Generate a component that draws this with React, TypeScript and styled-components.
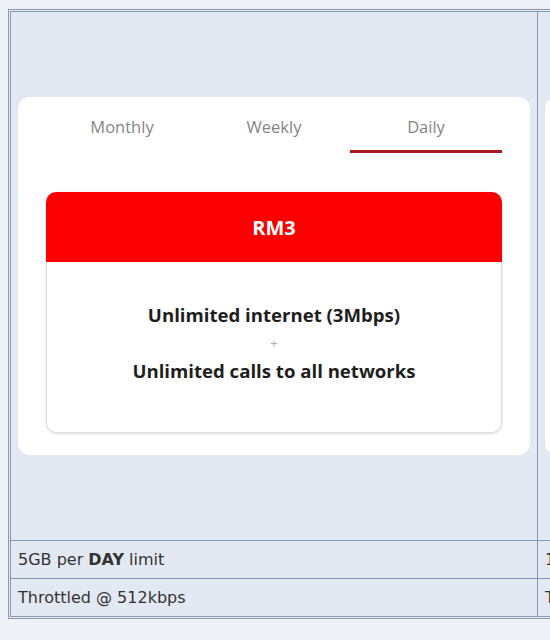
import { Fragment } from 'react';
import styled, { createGlobalStyle } from 'styled-components';

const GlobalStyle = createGlobalStyle`
  html, body {
    margin: 0;
    padding: 0;
    background: #eef1f6;
    overflow: hidden;
  }
  body {
    font-family: "DejaVu Sans", Verdana, sans-serif;
  }
`;

const Page = styled.div`
  padding: 9px 0 0 8px;
  width: 1200px;
`;

const Frame = styled.div`
  display: inline-block;
  border: 1px solid #8796ae;
  padding: 1px;
  background: #e9eef5;
`;

// tracks include each cell's right/bottom border
const Grid = styled.div`
  display: grid;
  grid-template-columns: 527px 527px;
  grid-template-rows: 529px 38px 38px;
  border-top: 1px solid #8796ae;
  border-left: 1px solid #8796ae;
`;

const Cell = styled.div<{ $media?: boolean }>`
  background: #e3e9f2;
  border-right: 1px solid #8796ae;
  border-bottom: 1px solid #8796ae;
  display: flex;
  align-items: center;
  justify-content: ${(p) => (p.$media ? 'center' : 'flex-start')};
  padding: ${(p) => (p.$media ? '0' : '0 7px')};
  font-size: 16px;
  color: #333;
  white-space: pre;
  overflow: hidden;
`;

const Card = styled.div`
  width: 512px;
  height: 358px;
  box-sizing: border-box;
  background: #fff;
  border-radius: 12px;
  padding: 0 28px;
  display: flex;
  flex-direction: column;
  font-family: "Open Sans", "Liberation Sans", sans-serif;
`;

const Tabs = styled.div`
  display: grid;
  grid-template-columns: repeat(3, 1fr);
  margin-top: 10px;
`;

const Tab = styled.div<{ $active?: boolean }>`
  text-align: center;
  font-size: 16.5px;
  line-height: 20px;
  color: #858585;
  padding: 10px 0 13px;
  border-bottom: 3px solid ${(p) => (p.$active ? '#ad1620' : 'transparent')};
`;

const Plan = styled.div`
  margin-top: 39px;
  border-radius: 10px;
  box-shadow: 0 1px 3px rgba(0, 0, 0, 0.12);
`;

const Price = styled.div`
  height: 70px;
  background: #fb0000;
  border-radius: 10px 10px 0 0;
  color: #fff;
  font-weight: 700;
  font-size: 20px;
  display: flex;
  align-items: center;
  justify-content: center;
`;

const Details = styled.div`
  height: 171px;
  box-sizing: border-box;
  padding-bottom: 9px;
  border: 1px solid #dcdcdc;
  border-top: none;
  border-radius: 0 0 10px 10px;
  display: flex;
  flex-direction: column;
  align-items: center;
  justify-content: center;
  gap: 8px;
`;

const Feature = styled.div`
  font-weight: 700;
  font-size: 18.6px;
  line-height: 24px;
  color: #1e1e1e;
`;

const Plus = styled.div`
  font-size: 13px;
  line-height: 16px;
  color: #b0b0b0;
`;

type PlanData = {
  price: string;
  features: string[];
};

function PlanCard({ active, plan }: { active: number; plan: PlanData }) {
  const tabs = ['Monthly', 'Weekly', 'Daily'];
  return (
    <Card>
      <Tabs>
        {tabs.map((t, i) => (
          <Tab key={t} $active={i === active}>{t}</Tab>
        ))}
      </Tabs>
      <Plan>
        <Price>{plan.price}</Price>
        <Details>
          {plan.features.map((f, i) => (
            <Fragment key={f}>
              {i > 0 && <Plus>+</Plus>}
              <Feature>{f}</Feature>
            </Fragment>
          ))}
        </Details>
      </Plan>
    </Card>
  );
}

const daily: PlanData = {
  price: 'RM3',
  features: ['Unlimited internet (3Mbps)', 'Unlimited calls to all networks'],
};

const weekly: PlanData = {
  price: 'RM15',
  features: ['Unlimited internet (6Mbps)', 'Unlimited calls to all networks'],
};

export default function App() {
  return (
    <Page>
      <GlobalStyle />
      <Frame>
        <Grid>
          <Cell $media>
            <PlanCard active={2} plan={daily} />
          </Cell>
          <Cell $media>
            <PlanCard active={1} plan={weekly} />
          </Cell>
          <Cell>5GB per <b>DAY</b> limit</Cell>
          <Cell>1GB per <b>WEEK</b> limit</Cell>
          <Cell>Throttled @ 512kbps</Cell>
          <Cell>Throttled @ 1Mbps</Cell>
        </Grid>
      </Frame>
    </Page>
  );
}
